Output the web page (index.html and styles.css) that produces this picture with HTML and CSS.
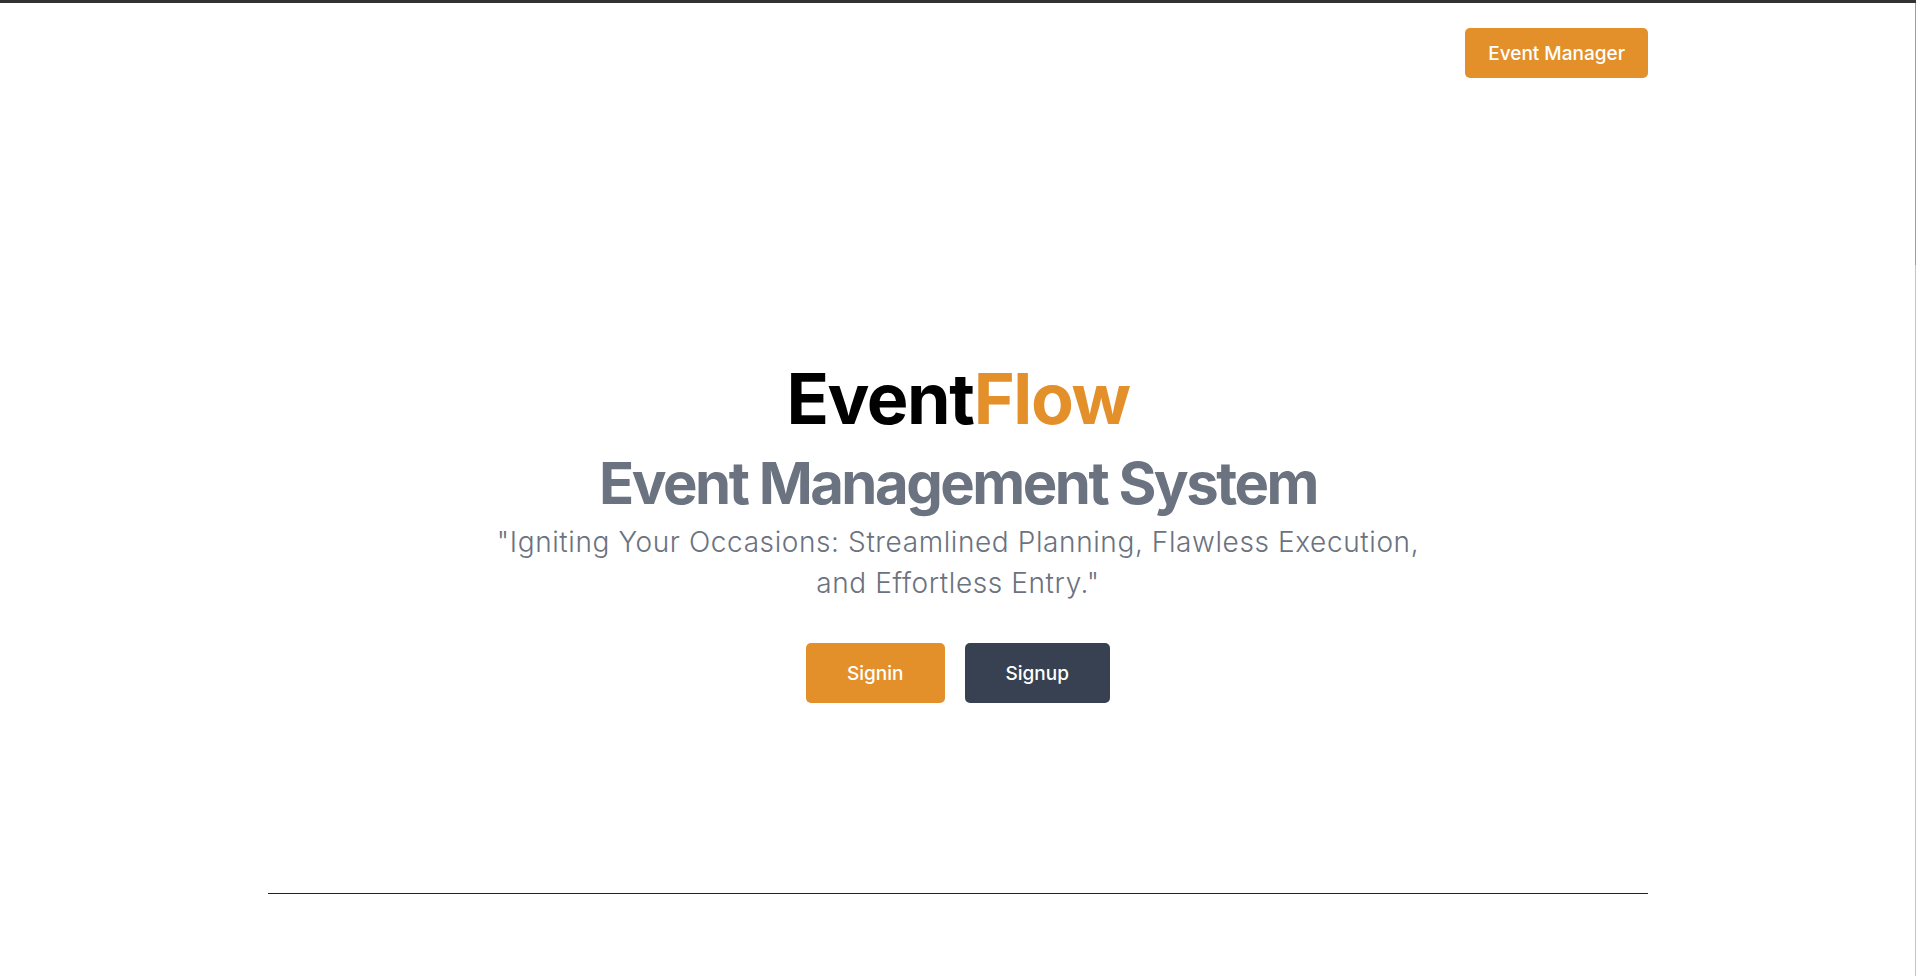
FILE: index.html
```html
<!DOCTYPE html>
<html lang="en">
<head>
<meta charset="utf-8">
<title>EventFlow</title>
<link rel="stylesheet" href="styles.css">
</head>
<body>
<div class="topbar"></div>
<div class="container">
  <header class="nav">
    <a class="btn btn-orange nav-btn" href="#">Event Manager</a>
  </header>
  <main class="hero">
    <h1 class="brand">Event<span class="accent">Flow</span></h1>
    <h2 class="subtitle">Event Management System</h2>
    <p class="tagline">"Igniting Your Occasions: Streamlined Planning, Flawless Execution,<br>and Effortless Entry."</p>
    <div class="actions">
      <a class="btn btn-orange hero-btn" href="#">Signin</a>
      <a class="btn btn-dark hero-btn" href="#">Signup</a>
    </div>
  </main>
  <hr class="divider">
</div>
<div class="scroll-track"><div class="scroll-thumb"></div></div>
</body>
</html>
```
FILE: styles.css
```css
html, body {
  margin: 0;
  padding: 0;
  background: #ffffff;
}
body {
  font-family: Inter, "Noto Sans", "Liberation Sans", sans-serif;
  color: #000;
  overflow: hidden;
  height: 976px;
}
.topbar {
  height: 3px;
  background: #333333;
}
.container {
  width: 1380px;
  margin: 0 auto;
}
.nav {
  display: flex;
  justify-content: flex-end;
  padding-top: 25px;
}
.btn {
  display: inline-flex;
  align-items: center;
  justify-content: center;
  color: #ffffff;
  text-decoration: none;
  font-weight: 500;
  border-radius: 5px;
  box-sizing: border-box;
}
.btn-orange { background: #e3902b; }
.btn-dark { background: #374151; }
.nav-btn {
  height: 50px;
  padding: 0 23px;
  font-size: 19px;
}
.hero {
  display: flex;
  flex-direction: column;
  align-items: center;
  text-align: center;
  margin-top: 285px;
}
.brand {
  margin: 0;
  font-size: 70px;
  line-height: 72px;
  font-weight: 700;
  letter-spacing: -1.4px;
  color: #000;
}
.accent { color: #e3902b; }
.subtitle {
  margin: 18px 0 0;
  font-size: 58px;
  line-height: 60px;
  font-weight: 700;
  letter-spacing: -2.5px;
  color: #6b7280;
}
.tagline {
  margin: 9px 0 0;
  font-size: 28px;
  line-height: 41px;
  font-weight: 300;
  letter-spacing: 0.6px;
  color: #6b7280;
}
.actions {
  display: flex;
  gap: 20px;
  margin-top: 39px;
}
.hero-btn {
  height: 60px;
  padding: 0 41px;
  font-size: 19px;
}
.divider {
  margin: 190px 0 0;
  border: 0;
  border-top: 1px solid #1f2328;
  height: 0;
}
.scroll-track {
  position: fixed;
  top: 3px;
  right: 0;
  bottom: 0;
  width: 1px;
  background: #c4c4c4;
}
.scroll-thumb {
  height: 262px;
  background: #e3902b;
}
```
